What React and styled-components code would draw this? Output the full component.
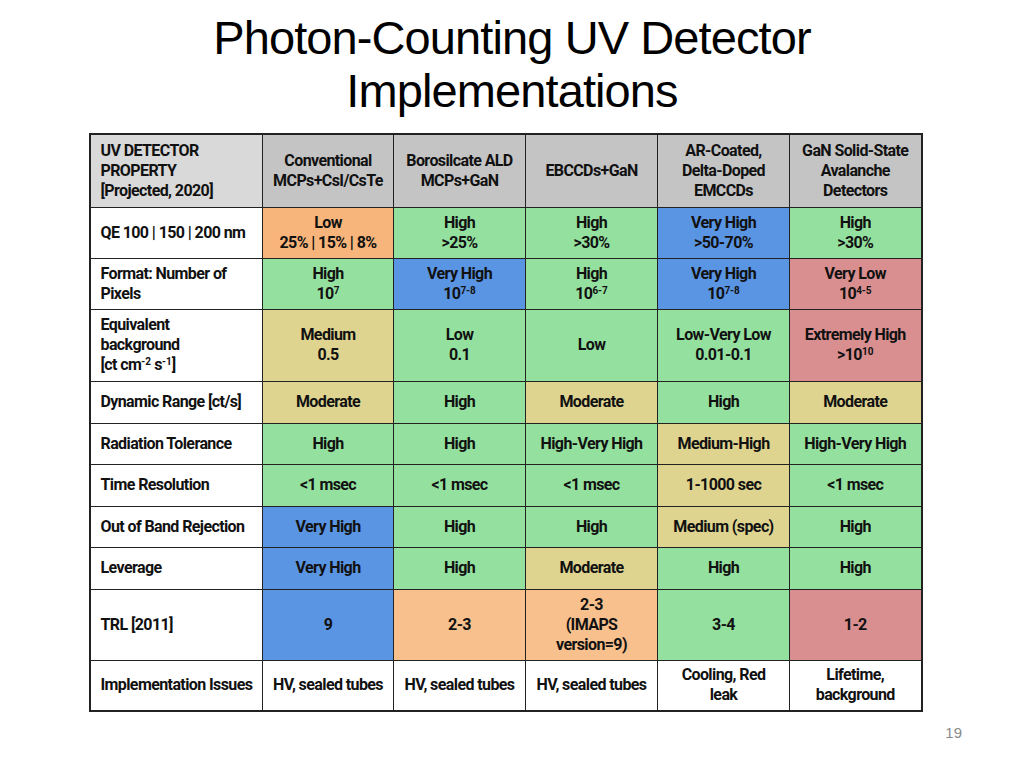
import React from 'react';
import styled, { createGlobalStyle } from 'styled-components';

const GlobalStyle = createGlobalStyle`
  html, body {
    margin: 0;
    padding: 0;
    background: #fff;
  }
  body {
    font-family: "Liberation Sans", Arial, sans-serif;
  }
`;

const Slide = styled.div`
  width: 1024px;
  height: 768px;
  display: flex;
  flex-direction: column;
  align-items: center;
  background: #fff;
`;

const Title = styled.h1`
  margin: 11px 0 0;
  font-family: "Liberation Sans", Arial, sans-serif;
  font-weight: normal;
  font-size: 47px;
  line-height: 53px;
  letter-spacing: -0.9px;
  color: #000;
  text-align: center;
`;

const Table = styled.table`
  margin-top: 16px;
  margin-left: -13px;
  border-collapse: collapse;
  border: 2px solid #222;
  table-layout: fixed;
  font-family: Roboto, "Liberation Sans", Arial, sans-serif;
  font-weight: bold;
  font-size: 16px;
  line-height: 20px;
  letter-spacing: -0.6px;
  color: #111;
`;

const Row = styled.tr`
  height: ${p => p.$h}px;
`;

const HeadCell = styled.th`
  border: 1px solid #222;
  background: ${p => (p.$first ? '#d9d9d9' : '#c4c4c4')};
  text-align: ${p => (p.$first ? 'left' : 'center')};
  padding: 0 ${p => (p.$first ? '10px' : '2px')};
  font-weight: bold;
  vertical-align: middle;
`;

const Label = styled.td`
  border: 1px solid #222;
  background: #fff;
  padding: 0 4px 0 10px;
  text-align: left;
  vertical-align: middle;
`;

const colors = {
  g: '#94e19f',
  b: '#5a95e4',
  o: '#f8b57b',
  p: '#f7c08d',
  r: '#d98f8f',
  y: '#ded490',
  w: '#ffffff',
};

const Cell = styled.td`
  border: 1px solid #222;
  background: ${p => colors[p.$c]};
  text-align: center;
  padding: 0 2px;
  vertical-align: middle;
`;

const Sup = styled.sup`
  font-size: 10px;
  line-height: 0;
  vertical-align: 5px;
  letter-spacing: 0;
`;

const PageNum = styled.div`
  align-self: flex-end;
  margin: 12px 62px 0 0;
  font-family: "Liberation Sans", Arial, sans-serif;
  font-size: 15px;
  color: #8a8a8a;
`;

const cols = [173, 131, 132, 132, 132, 132];

const heads = [
  <>UV DETECTOR<br />PROPERTY<br />[Projected, 2020]</>,
  <>Conventional<br />MCPs+CsI/CsTe</>,
  <>Borosilcate ALD<br />MCPs+GaN</>,
  <>EBCCDs+GaN</>,
  <>AR-Coated,<br />Delta-Doped<br />EMCCDs</>,
  <>GaN Solid-State<br />Avalanche<br />Detectors</>,
];

const rows = [
  {
    h: 51,
    label: <>QE 100 | 150 | 200 nm</>,
    cells: [
      ['o', <>Low<br />25% | 15% | 8%</>],
      ['g', <>High<br />&gt;25%</>],
      ['g', <>High<br />&gt;30%</>],
      ['b', <>Very High<br />&gt;50-70%</>],
      ['g', <>High<br />&gt;30%</>],
    ],
  },
  {
    h: 51,
    label: <>Format: Number of<br />Pixels</>,
    cells: [
      ['g', <>High<br />10<Sup>7</Sup></>],
      ['b', <>Very High<br />10<Sup>7-8</Sup></>],
      ['g', <>High<br />10<Sup>6-7</Sup></>],
      ['b', <>Very High<br />10<Sup>7-8</Sup></>],
      ['r', <>Very Low<br />10<Sup>4-5</Sup></>],
    ],
  },
  {
    h: 72,
    label: <>Equivalent<br />background<br />[ct cm<Sup>-2</Sup> s<Sup>-1</Sup>]</>,
    cells: [
      ['y', <>Medium<br />0.5</>],
      ['g', <>Low<br />0.1</>],
      ['g', <>Low</>],
      ['g', <>Low-Very Low<br />0.01-0.1</>],
      ['r', <>Extremely High<br />&gt;10<Sup>10</Sup></>],
    ],
  },
  {
    h: 42,
    label: 'Dynamic Range [ct/s]',
    cells: [['y', 'Moderate'], ['g', 'High'], ['y', 'Moderate'], ['g', 'High'], ['y', 'Moderate']],
  },
  {
    h: 41,
    label: 'Radiation Tolerance',
    cells: [['g', 'High'], ['g', 'High'], ['g', 'High-Very High'], ['y', 'Medium-High'], ['g', 'High-Very High']],
  },
  {
    h: 42,
    label: 'Time Resolution',
    cells: [['g', '<1 msec'], ['g', '<1 msec'], ['g', '<1 msec'], ['y', '1-1000 sec'], ['g', '<1 msec']],
  },
  {
    h: 41,
    label: 'Out of Band Rejection',
    cells: [['b', 'Very High'], ['g', 'High'], ['g', 'High'], ['y', 'Medium (spec)'], ['g', 'High']],
  },
  {
    h: 42,
    label: 'Leverage',
    cells: [['b', 'Very High'], ['g', 'High'], ['y', 'Moderate'], ['g', 'High'], ['g', 'High']],
  },
  {
    h: 71,
    label: 'TRL [2011]',
    cells: [
      ['b', '9'],
      ['p', '2-3'],
      ['p', <>2-3<br />(IMAPS<br />version=9)</>],
      ['g', '3-4'],
      ['r', '1-2'],
    ],
  },
  {
    h: 51,
    label: 'Implementation Issues',
    cells: [
      ['w', 'HV, sealed tubes'],
      ['w', 'HV, sealed tubes'],
      ['w', 'HV, sealed tubes'],
      ['w', <>Cooling, Red<br />leak</>],
      ['w', <>Lifetime,<br />background</>],
    ],
  },
];

export default function App() {
  return (
    <>
      <GlobalStyle />
      <Slide>
        <Title>
          Photon-Counting UV Detector
          <br />
          Implementations
        </Title>
        <Table>
          <colgroup>
            {cols.map((w, i) => (
              <col key={i} style={{ width: w }} />
            ))}
          </colgroup>
          <thead>
            <Row $h={73}>
              {heads.map((h, i) => (
                <HeadCell key={i} $first={i === 0}>
                  {h}
                </HeadCell>
              ))}
            </Row>
          </thead>
          <tbody>
            {rows.map((r, i) => (
              <Row key={i} $h={r.h}>
                <Label>{r.label}</Label>
                {r.cells.map(([c, t], j) => (
                  <Cell key={j} $c={c}>
                    {t}
                  </Cell>
                ))}
              </Row>
            ))}
          </tbody>
        </Table>
        <PageNum>19</PageNum>
      </Slide>
    </>
  );
}
